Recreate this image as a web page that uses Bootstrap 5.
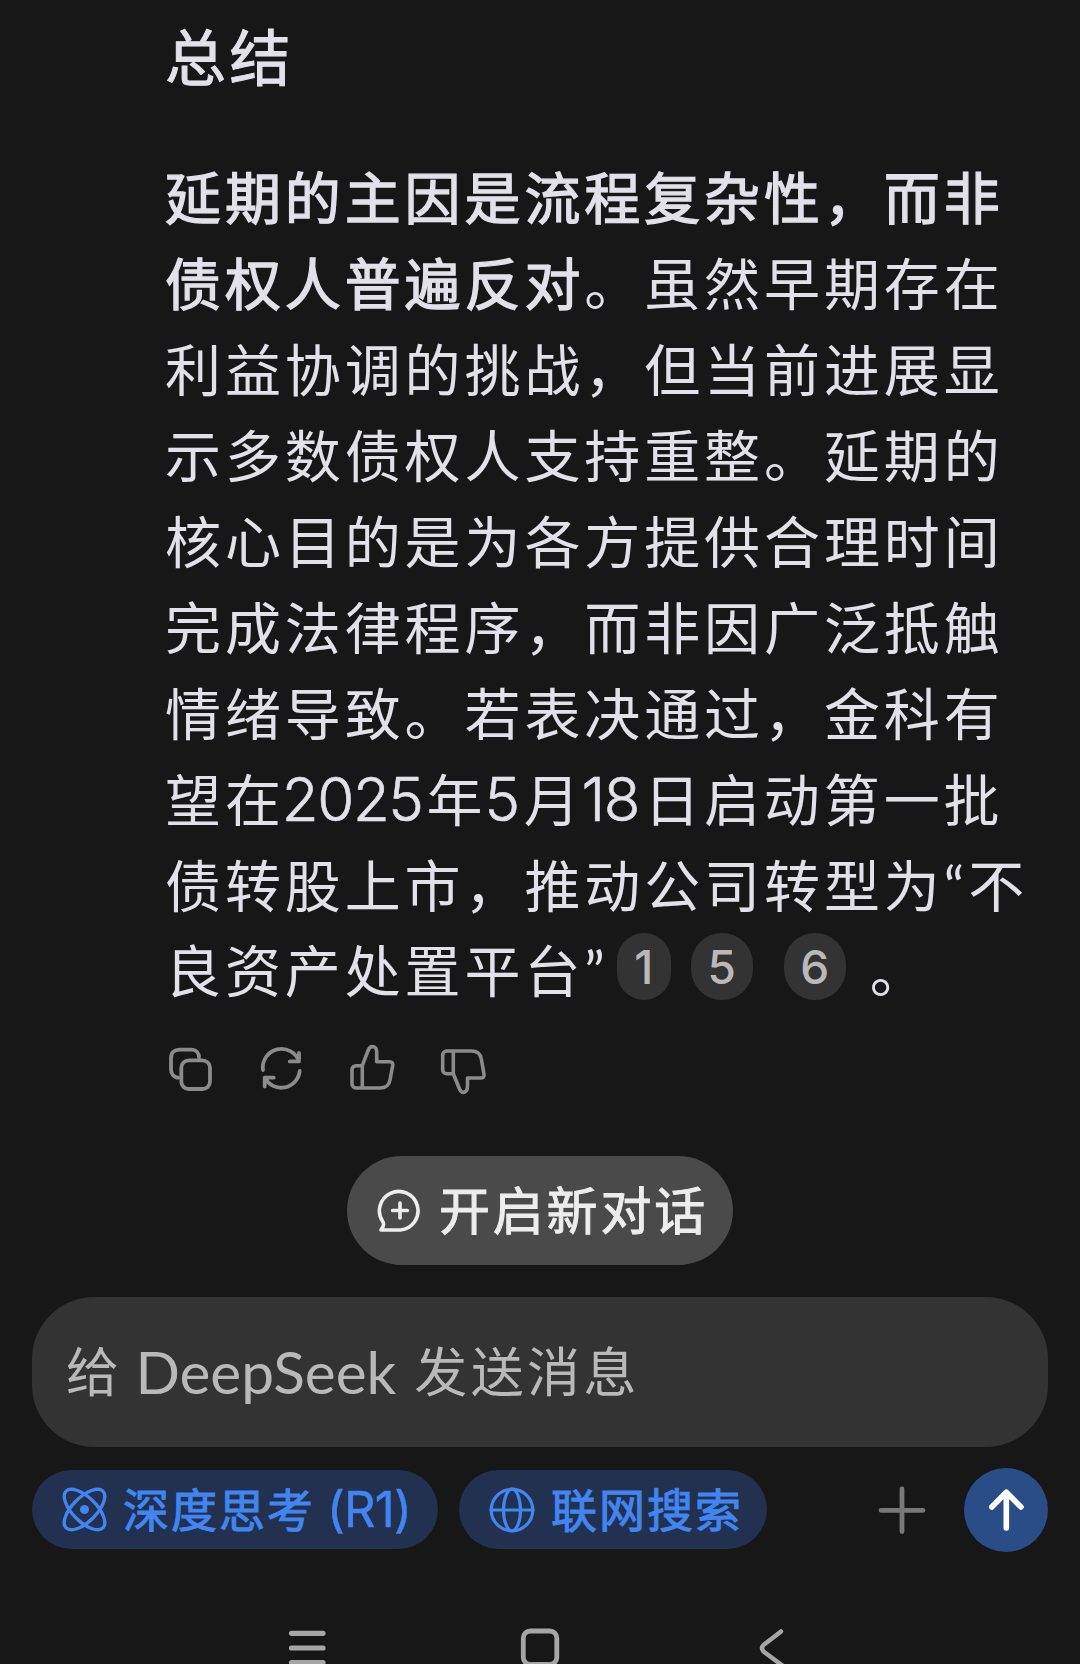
<!DOCTYPE html>
<html lang="zh-CN" data-bs-theme="dark">
<head>
<meta charset="utf-8">
<meta name="viewport" content="width=device-width, initial-scale=1">
<title>DeepSeek</title>
<link href="https://cdn.jsdelivr.net/npm/bootstrap@5.3.0/dist/css/bootstrap.min.css" rel="stylesheet">
<style>
  body { background: #171717; color: #e2e1ea; font-family: Lato, "Noto Sans CJK SC", sans-serif; height: 1664px; overflow: hidden; }
  svg { display: block; flex: none; fill: none; stroke: currentColor; stroke-linecap: round; stroke-linejoin: round; }
  .semi { -webkit-text-stroke: 1.3px currentColor; font-weight: 400; }
  .answer { padding: 13px 0 0 165px; }
  .answer h2 { color: inherit; font-size: 61px; line-height: 90px; letter-spacing: 3.4px; height: 142px; -webkit-text-stroke-width: 1px; }
  .answer-line { font-size: 56px; line-height: 86px; height: 85.95px; letter-spacing: 3.9px; white-space: nowrap; }
  .num, .cite, .latin { font-family: Inter, "Noto Sans CJK SC", sans-serif; }
  .num { font-size: 60px; font-weight: 300; letter-spacing: -1.4px; line-height: 1; -webkit-text-stroke: .6px currentColor; }
  .num-year { margin: 0 4px 0 -3px; }
  .num-month { margin: 0 5px 0 -2px; }
  .num-day { margin: 0 5px 0 -2px; }
  .quote { letter-spacing: 0; }
  .quote-open { margin-right: 4px; }
  .cite-row { padding-bottom: 9px; margin-left: 12px; }
  .cite { width: 62px; height: 67px; border-radius: 31px; background: #333; color: #b9b9b9; font-size: 46px; font-weight: 500; letter-spacing: 0; }
  .cite-slim { width: 54px; border-radius: 27px; margin-right: 20px; }
  .cite-last { margin-left: 31px; }
  .actions { gap: 43px; margin: 29.5px 0 0 1px; color: #8b8b8b; }
  .new-chat { width: 386px; height: 109px; margin-top: 60px; background: #4a4a4a; color: #ededed; font-size: 51px; letter-spacing: 2.8px; padding: 0 0 0 30px; line-height: 1; }
  .new-chat.semi { -webkit-text-stroke-width: 1px; }
  .composer { margin: 32px 32px 0; height: 150px; border-radius: 62px; background: #333; color: #b9b9b9; font-size: 53px; padding-left: 34px; letter-spacing: 3.4px; white-space: nowrap; }
  .brand { font-size: 58.5px; letter-spacing: 0; margin: 0 18px 0 13px; }
  .tools { margin: 21px 32px 0; height: 84px; }
  .tool { height: 79px; background: #21314f; color: #4285f1; font-size: 46px; letter-spacing: 2px; line-height: 1; padding: 0 0 0 30px; white-space: nowrap; }
  .tool.semi { -webkit-text-stroke-width: 1px; }
  .latin { font-size: 49px; letter-spacing: -.8px; margin-left: 12px; -webkit-text-stroke-width: .5px; }
  .send { width: 84px; height: 84px; background: #2a4d87; color: #fff; margin-left: 38px; }
  .plus { color: #787878; }
  .sysnav { margin-top: 72px; height: 40px; color: #a6a6a6; }
</style>
</head>
<body>
<main class="d-flex flex-column">
  <article class="answer">
    <h2 class="semi m-0">总结</h2>
    <div class="answer-line semi">延期的主因是流程复杂性，而非</div>
    <div class="answer-line"><span class="semi">债权人普遍反对</span>。虽然早期存在</div>
    <div class="answer-line">利益协调的挑战，但当前进展显</div>
    <div class="answer-line">示多数债权人支持重整。延期的</div>
    <div class="answer-line">核心目的是为各方提供合理时间</div>
    <div class="answer-line">完成法律程序，而非因广泛抵触</div>
    <div class="answer-line">情绪导致。若表决通过，金科有</div>
    <div class="answer-line">望在<span class="num num-year">2025</span>年<span class="num num-month">5</span>月<span class="num num-day">18</span>日启动第一批</div>
    <div class="answer-line">债转股上市，推动公司转型为<span class="quote quote-open">“</span>不</div>
    <div class="answer-line d-flex">
      <span>良资产处置平台<span class="quote">”</span></span>
      <span class="cite-row d-flex align-items-center">
        <span class="cite cite-slim d-flex align-items-center justify-content-center">1</span>
        <span class="cite d-flex align-items-center justify-content-center">5</span>
        <span class="cite cite-last d-flex align-items-center justify-content-center">6</span>
      </span>
      <span class="ms-4">。</span>
    </div>
    <div class="actions d-flex">
      <svg width="48" height="52" stroke-width="3.8"><path d="M33 13.3C33 8.6 30 5.7 25.5 5.7H13.5C8.400 5.700 5 9 5 14V25.500C5 30 8 33.700 12.300 33.700"/><rect x="15.300" y="16.300" width="28.700" height="28.700" rx="7.500"/></svg>
      <svg width="48" height="52" stroke-width="3.800"><path d="M6 26A18.600 18.600 0 0 1 42 17.400M42 9V17.400H32.800M42.700 27A18.600 18.600 0 0 1 7.700 33.700M7.700 42.500V33.700H16.700"/></svg>
      <svg width="48" height="52" stroke-width="3.600"><path d="M14.300 44H8A4 4 0 0 1 4 40V25.700A4 4 0 0 1 8 21.700H14.300ZM14.300 44H32C38 44 41 41.500 42 36L44.700 21.500C45 19 44 17.700 41.500 17.700H28.700V8C28.700 1.500 22.300 1 20.300 6L14.300 21.700"/></svg>
      <svg width="48" height="52" stroke-width="3.600"><path d="M14.300 7H7.700A4 4 0 0 0 3.700 11V25.700A4 4 0 0 0 7.700 29.700H14.300ZM14.300 7H32.500C38.500 7 41.500 9.500 42.300 15L45 30C45.400 32.700 44.500 34 42 34H28.500V42C28.500 49.500 22.700 50 20.500 45L14.300 29.700"/></svg>
    </div>
  </article>

  <button class="new-chat semi btn border-0 rounded-pill d-flex align-items-center align-self-center">
    <svg width="46" height="46" stroke-width="3.600"><path d="M4 43C6.500 40 7.500 38 6 35A19.300 19.300 0 1 1 23.500 43ZM23 16V31M15.500 23.500H30.500"/></svg>
    <span class="ms-3">开启新对话</span>
  </button>

  <div class="composer d-flex align-items-center"><span>给</span><span class="brand">DeepSeek</span><span>发送消息</span></div>

  <div class="tools d-flex align-items-center">
    <button class="tool semi btn border-0 rounded-pill d-flex align-items-center" style="width:406px">
      <svg width="45" height="45" viewBox="0 0 45 45" stroke-width="3.400"><ellipse cx="22.500" cy="22.500" rx="26" ry="12" transform="rotate(45 22.500 22.500)"/><ellipse cx="22.500" cy="22.500" rx="26" ry="12" transform="rotate(-45 22.500 22.500)"/><circle cx="22.500" cy="22.500" r="4.500" fill="currentColor" stroke="none"/></svg>
      <span class="ms-3">深度思考<span class="latin">(R1)</span></span>
    </button>
    <button class="tool semi btn border-0 rounded-pill d-flex align-items-center" style="width:308px;margin-left:21px">
      <svg width="46" height="46" stroke-width="3.200"><circle cx="23" cy="23" r="20.800"/><ellipse cx="23" cy="23" rx="8.500" ry="20.800"/><path d="M2 23H44"/></svg>
      <span class="ms-3">联网搜索</span>
    </button>
    <svg class="plus ms-auto" width="48" height="48" stroke-width="4.800"><path d="M24 3V45.500M3 24.300H45"/></svg>
    <button class="send btn border-0 rounded-circle p-0" aria-label="发送">
      <svg width="84" height="84" stroke-width="5.600"><path d="M42.300 60V24.300M27.800 39L42.300 24.300L57 39"/></svg>
    </button>
  </div>

  <nav class="sysnav">
    <svg width="1080" height="40"><g stroke-width="5.200"><path d="M291.500 9.300H323M291.500 24H323M291.500 38.600H323"/></g><rect x="523.300" y="7" width="33.500" height="33.500" rx="7" stroke-width="4.800"/><path d="M781 7.500L763.500 21Q760.500 24 763.500 27.500L783 42" stroke-width="4.500"/></svg>
  </nav>
</main>
<script src="https://cdn.jsdelivr.net/npm/bootstrap@5.3.0/dist/js/bootstrap.bundle.min.js"></script>
</body>
</html>
